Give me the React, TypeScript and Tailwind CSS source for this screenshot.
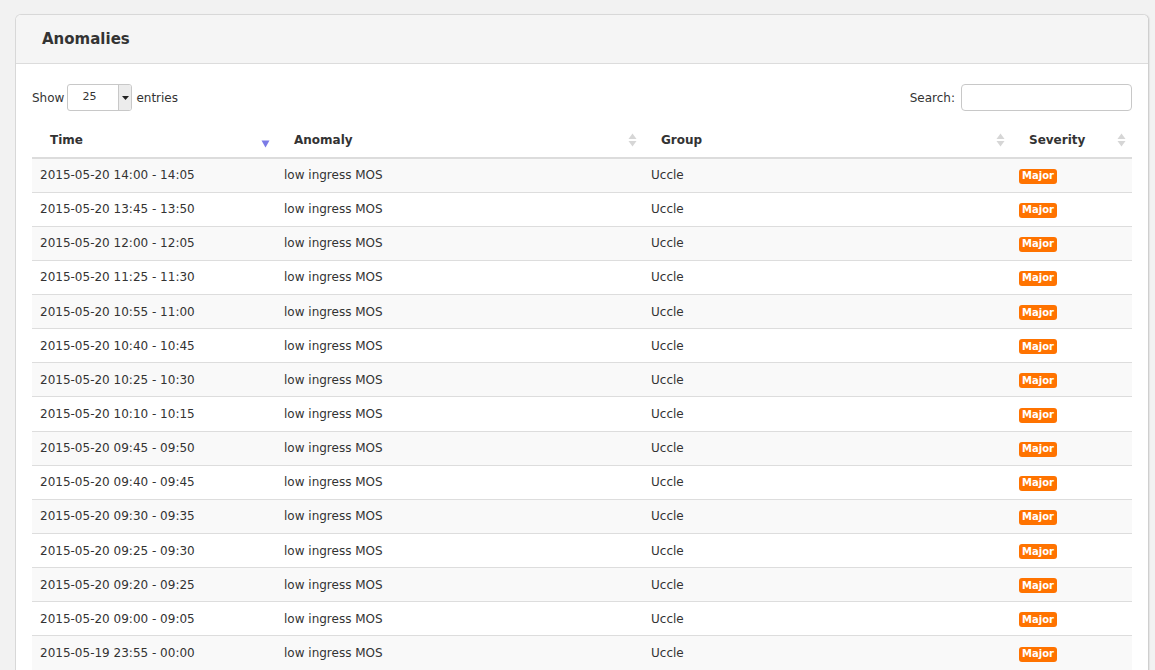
import React from "react";

const rows: [string, string][] = [
  ["2015-05-20", "14:00 - 14:05"],
  ["2015-05-20", "13:45 - 13:50"],
  ["2015-05-20", "12:00 - 12:05"],
  ["2015-05-20", "11:25 - 11:30"],
  ["2015-05-20", "10:55 - 11:00"],
  ["2015-05-20", "10:40 - 10:45"],
  ["2015-05-20", "10:25 - 10:30"],
  ["2015-05-20", "10:10 - 10:15"],
  ["2015-05-20", "09:45 - 09:50"],
  ["2015-05-20", "09:40 - 09:45"],
  ["2015-05-20", "09:30 - 09:35"],
  ["2015-05-20", "09:25 - 09:30"],
  ["2015-05-20", "09:20 - 09:25"],
  ["2015-05-20", "09:00 - 09:05"],
  ["2015-05-19", "23:55 - 00:00"],
];

function SortBoth() {
  return (
    <svg width="9" height="14" viewBox="0 0 9 14" className="shrink-0">
      <path d="M4.5 0.5 L8.5 6 L0.5 6 Z" fill="#d6d6d6" />
      <path d="M4.5 13.5 L8.5 8 L0.5 8 Z" fill="#d6d6d6" />
    </svg>
  );
}

function SortDesc() {
  return (
    <svg width="9" height="8" viewBox="0 0 9 8" className="shrink-0 mt-[8px]">
      <path d="M0.5 0.5 L8.5 0.5 L4.5 7.5 Z" fill="#7b7be6" />
    </svg>
  );
}

export default function App() {
  const font = { fontFamily: '"DejaVu Sans", "Liberation Sans", sans-serif' };
  return (
    <div className="h-[670px] bg-[#f2f2f2] pt-[14px] pl-[15px] overflow-hidden" style={font}>
      <div className="w-[1134px] bg-white border border-[#d8d8d8] border-r-[#cfcfcf] rounded-t-[6px] overflow-hidden text-[#333] shadow-[1px_0_1px_rgba(0,0,0,0.06)]">
        <div className="h-[49px] bg-[#f5f5f5] border-b border-[#dcdcdc] flex items-center px-[26px]">
          <h2 className="text-[15px] font-bold text-[#333]">Anomalies</h2>
        </div>
        <div className="px-[16px] pt-[20px]">
          <div className="flex items-center justify-between h-[27px] text-[12px]">
            <div className="flex items-center">
              <span>Show</span>
              <div className="ml-[3px] w-[65px] h-[27px] border border-[#c8c8c8] rounded-[3px] flex items-stretch overflow-hidden">
                <div className="flex-1 flex items-center pl-[14px] text-[11px]">25</div>
                <div className="w-[13px] bg-[#ececec] border-l border-[#c8c8c8] flex items-center justify-center">
                  <svg width="7" height="4" viewBox="0 0 7 4">
                    <path d="M0 0 L7 0 L3.5 4 Z" fill="#222" />
                  </svg>
                </div>
              </div>
              <span className="ml-[4px]">entries</span>
            </div>
            <div className="flex items-center">
              <span>Search:</span>
              <div className="ml-[6px] w-[171px] h-[27px] border border-[#c8c8c8] rounded-[4px] bg-white" />
            </div>
          </div>
          <table className="mt-[12px] w-[1100px] border-collapse text-[12px] table-fixed">
            <colgroup>
              <col className="w-[244px]" />
              <col className="w-[367px]" />
              <col className="w-[368px]" />
              <col className="w-[121px]" />
            </colgroup>
            <thead>
              <tr className="h-[35px] border-b-2 border-[#dcdcdc]">
                {["Time", "Anomaly", "Group", "Severity"].map((h, i) => (
                  <th key={h} className="p-0 font-bold text-left">
                    <div className="flex items-center justify-between pl-[18px] pr-[6px]">
                      <span>{h}</span>
                      {i === 0 ? <SortDesc /> : <SortBoth />}
                    </div>
                  </th>
                ))}
              </tr>
            </thead>
            <tbody>
              {rows.map(([d, t], i) => (
                <tr key={i} className={`h-[34.15px] border-b border-[#dddddd] ${i % 2 === 0 ? "bg-[#f9f9f9]" : "bg-white"}`}>
                  <td className="pl-[8px] p-0">{d} {t}</td>
                  <td className="pl-[8px] p-0">low ingress MOS</td>
                  <td className="pl-[8px] p-0">Uccle</td>
                  <td className="pl-[8px] p-0">
                    <span className="inline-flex items-center h-[15px] px-[3px] rounded-[3px] bg-[#ff7300] text-white text-[10px] font-bold leading-none">
                      Major
                    </span>
                  </td>
                </tr>
              ))}
            </tbody>
          </table>
        </div>
      </div>
    </div>
  );
}
